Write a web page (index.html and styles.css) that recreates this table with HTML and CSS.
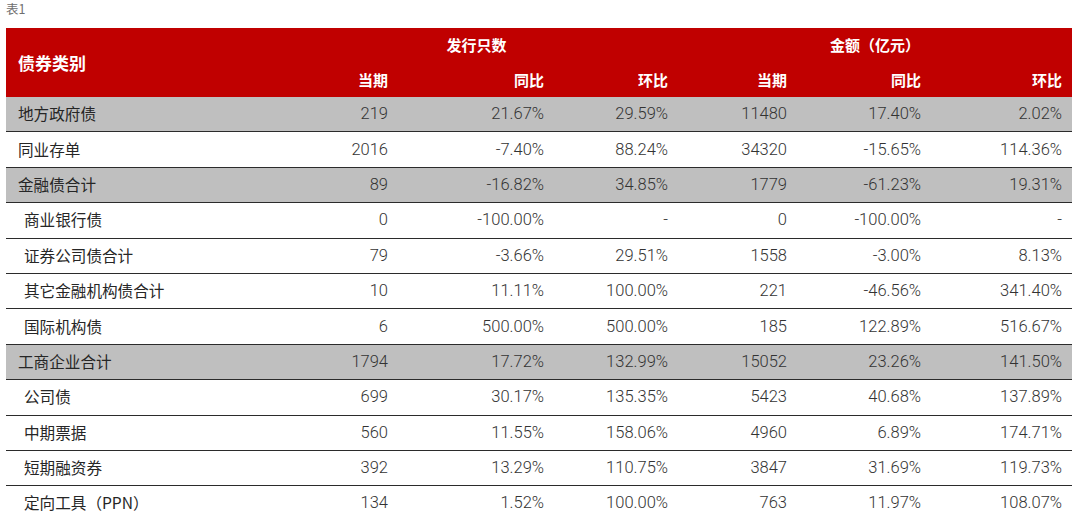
FILE: index.html
```html
<!DOCTYPE html>
<html lang="zh-CN">
<head>
<meta charset="utf-8">
<link rel="stylesheet" href="styles.css">
</head>
<body>
<div class="caption">表1</div>
<table class="tbl">
  <colgroup>
    <col class="c1"><col class="c2"><col class="c3"><col class="c4"><col class="c5"><col class="c6"><col class="c7">
  </colgroup>
  <thead>
    <tr class="h1">
      <th rowspan="2" class="name">债券类别</th>
      <th colspan="3" class="grp">发行只数</th>
      <th colspan="3" class="grp">金额（亿元）</th>
    </tr>
    <tr class="h2">
      <th>当期</th><th>同比</th><th>环比</th><th>当期</th><th>同比</th><th>环比</th>
    </tr>
  </thead>
  <tbody>
    <tr class="sum"><td class="name">地方政府债</td><td>219</td><td>21.67%</td><td>29.59%</td><td>11480</td><td>17.40%</td><td>2.02%</td></tr>
    <tr><td class="name">同业存单</td><td>2016</td><td>-7.40%</td><td>88.24%</td><td>34320</td><td>-15.65%</td><td>114.36%</td></tr>
    <tr class="sum"><td class="name">金融债合计</td><td>89</td><td>-16.82%</td><td>34.85%</td><td>1779</td><td>-61.23%</td><td>19.31%</td></tr>
    <tr><td class="name sub">商业银行债</td><td>0</td><td>-100.00%</td><td>-</td><td>0</td><td>-100.00%</td><td>-</td></tr>
    <tr><td class="name sub">证券公司债合计</td><td>79</td><td>-3.66%</td><td>29.51%</td><td>1558</td><td>-3.00%</td><td>8.13%</td></tr>
    <tr><td class="name sub">其它金融机构债合计</td><td>10</td><td>11.11%</td><td>100.00%</td><td>221</td><td>-46.56%</td><td>341.40%</td></tr>
    <tr><td class="name sub">国际机构债</td><td>6</td><td>500.00%</td><td>500.00%</td><td>185</td><td>122.89%</td><td>516.67%</td></tr>
    <tr class="sum"><td class="name">工商企业合计</td><td>1794</td><td>17.72%</td><td>132.99%</td><td>15052</td><td>23.26%</td><td>141.50%</td></tr>
    <tr><td class="name sub">公司债</td><td>699</td><td>30.17%</td><td>135.35%</td><td>5423</td><td>40.68%</td><td>137.89%</td></tr>
    <tr><td class="name sub">中期票据</td><td>560</td><td>11.55%</td><td>158.06%</td><td>4960</td><td>6.89%</td><td>174.71%</td></tr>
    <tr><td class="name sub">短期融资券</td><td>392</td><td>13.29%</td><td>110.75%</td><td>3847</td><td>31.69%</td><td>119.73%</td></tr>
    <tr><td class="name sub">定向工具（PPN）</td><td>134</td><td>1.52%</td><td>100.00%</td><td>763</td><td>11.97%</td><td>108.07%</td></tr>
  </tbody>
</table>
</body>
</html>
```

FILE: styles.css
```css
html, body {
  margin: 0;
  padding: 0;
  background: #ffffff;
}
body {
  padding: 0 8px 0 6px;
  font-family: "Noto Sans CJK SC", "Noto Sans", sans-serif;
  overflow: hidden;
}
.caption {
  font-size: 12.5px;
  line-height: 17px;
  color: #6e6e6e;
  height: 28px;
}
.tbl {
  width: 1066px;
  border-collapse: collapse;
  table-layout: fixed;
}
.c1 { width: 269px; }
.c2 { width: 123px; }
.c3 { width: 156px; }
.c4 { width: 124px; }
.c5 { width: 119px; }
.c6 { width: 134px; }
.c7 { width: 141px; }
thead th {
  background: #c00000;
  color: #ffffff;
  font-size: 15px;
  font-weight: 700;
  padding: 0 10px 0 0;
  text-align: right;
  line-height: 20px;
}
thead .h1 th { height: 34px; }
thead .h2 th { height: 35px; }
thead th.grp { text-align: center; padding: 0; }
thead th.name { text-align: left; padding-left: 12px; font-size: 17px; }
tbody td {
  height: 34.4px;
  padding: 0 10px 0 0;
  text-align: right;
  font-family: Roboto, "Noto Sans", sans-serif;
  font-weight: 300;
  font-size: 16.5px;
  line-height: 20px;
  color: #333333;
  border-bottom: 1.5px solid #2b2b2b;
}
tbody td.name {
  height: 32.4px;
  text-align: left;
  font-family: "Noto Sans CJK SC", sans-serif;
  font-weight: 400;
  font-size: 15.6px;
  padding-left: 12px;
  padding-bottom: 2px;
  color: #262626;
}
tbody td.sub { padding-left: 18px; }
tbody tr.sum td { background: #bfbfbf; }
```
